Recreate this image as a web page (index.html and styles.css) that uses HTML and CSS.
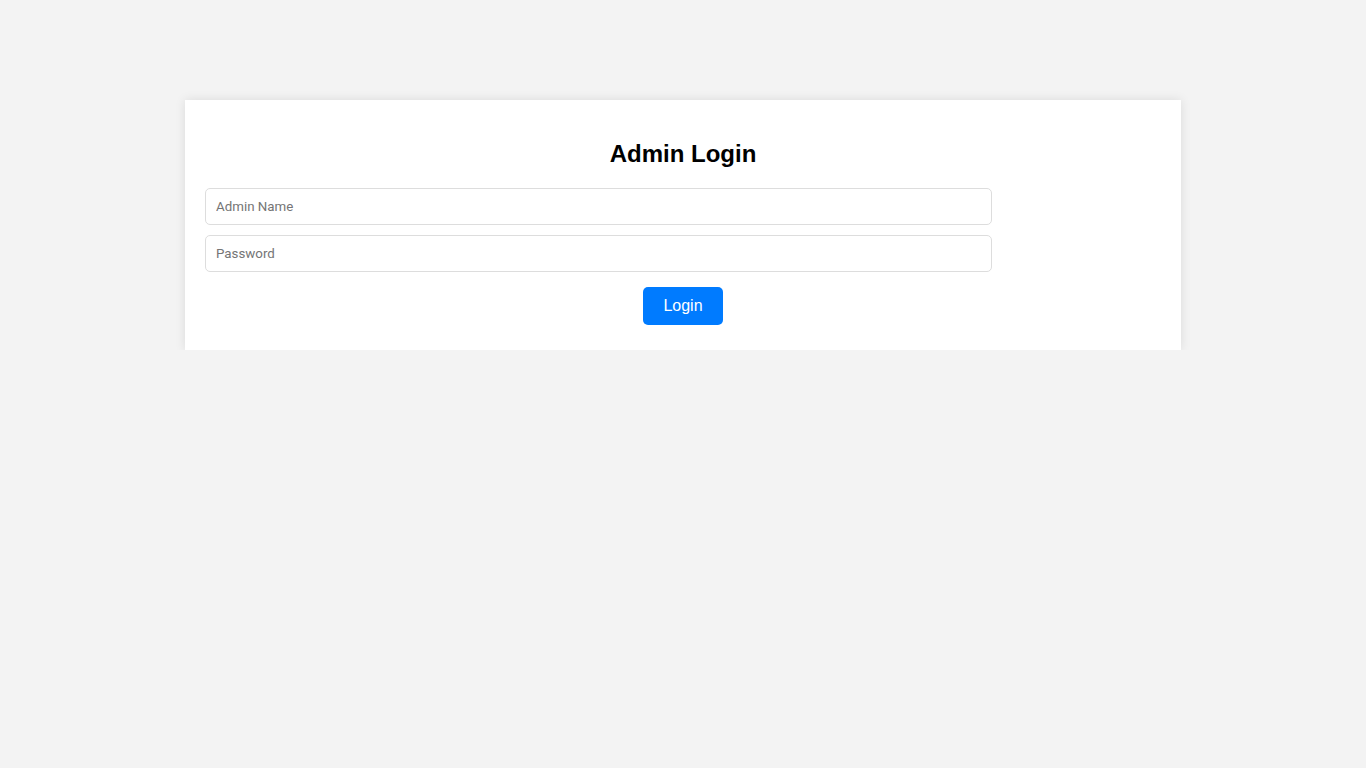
FILE: index.html
```html
<!DOCTYPE html>
<html lang="en">
<head>
<meta charset="utf-8">
<title>Admin Login</title>
<link rel="stylesheet" href="styles.css">
</head>
<body>
<div class="card">
  <h2 class="title">Admin Login</h2>
  <form class="login-form">
    <input class="field" type="text" placeholder="Admin Name">
    <input class="field" type="password" placeholder="Password">
    <button class="btn" type="button">Login</button>
  </form>
</div>
</body>
</html>
```
FILE: styles.css
```css
html, body {
  margin: 0;
  padding: 0;
}
body {
  background: #f3f3f3;
  font-family: "Liberation Sans", Arial, sans-serif;
  padding-top: 100px;
}
.card {
  width: 956px;
  margin: 0 auto;
  padding: 20px 20px 25px;
  background: #fff;
  box-shadow: 0 0 10px rgba(0, 0, 0, 0.1);
}
.title {
  margin: 20px 0;
  font-size: 24px;
  line-height: 28px;
  font-weight: bold;
  text-align: center;
  color: #000;
}
.login-form {
  display: flex;
  flex-direction: column;
  align-items: flex-start;
}
.field {
  box-sizing: content-box;
  width: 80%;
  height: 15px;
  padding: 10px;
  margin: 0 0 10px;
  border: 1px solid #ddd;
  border-radius: 5px;
  font-family: Roboto, "Liberation Sans", sans-serif;
  font-size: 13.33px;
  color: #333;
  outline: none;
}
.field::placeholder {
  color: #757575;
}
.btn {
  align-self: center;
  margin-top: 5px;
  padding: 10px 20px;
  height: 38px;
  border: none;
  border-radius: 5px;
  background: #007bff;
  color: #fff;
  font-family: "Liberation Sans", Arial, sans-serif;
  font-size: 16px;
  line-height: 18px;
  cursor: pointer;
}
```
